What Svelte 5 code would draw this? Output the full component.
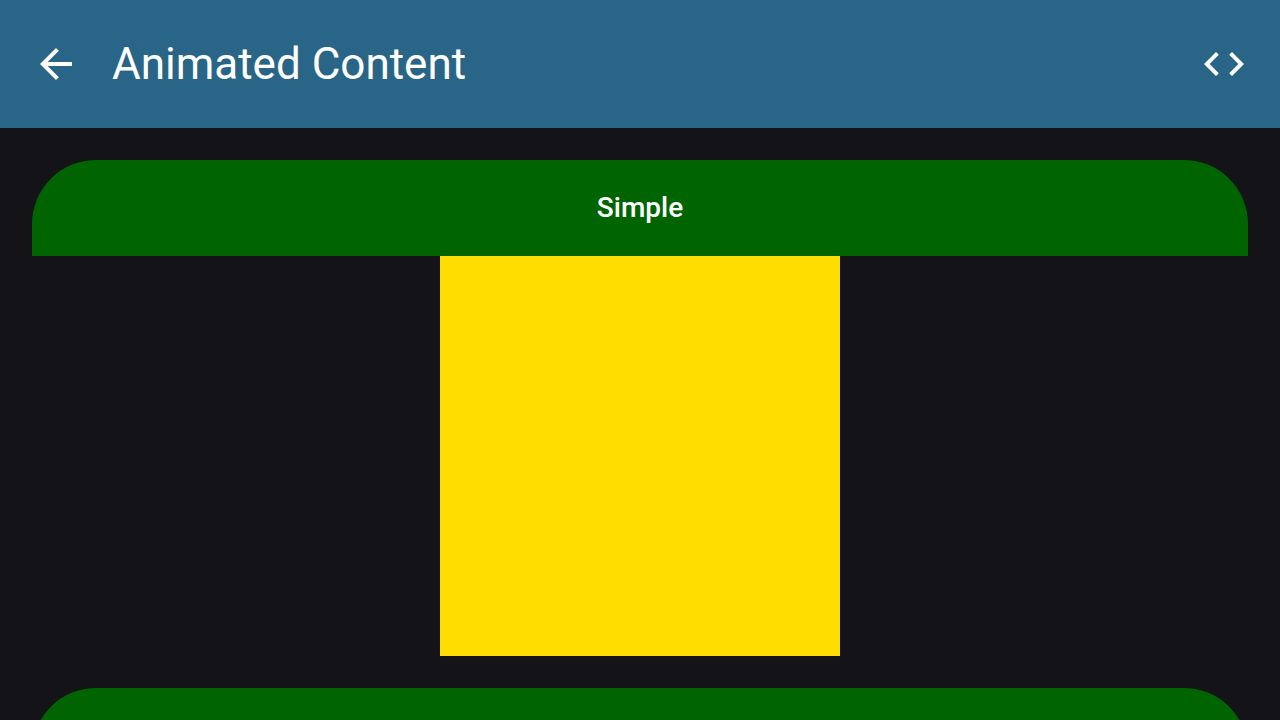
<script lang="ts">
  const sections = ['Simple', ''];
  let expanded = $state([true, true]);

  function toggle(index: number) {
    expanded[index] = !expanded[index];
  }
</script>

<div class="screen">
  <header>
    <button class="icon" aria-label="Back">
      <svg viewBox="0 0 24 24" aria-hidden="true">
        <path d="M20 11H7.83l5.59-5.59L12 4l-8 8 8 8 1.41-1.41L7.83 13H20v-2z" />
      </svg>
    </button>
    <h1>Animated Content</h1>
    <button class="icon" aria-label="View source">
      <svg viewBox="0 0 24 24" aria-hidden="true">
        <path d="M9.4 16.6L4.8 12l4.6-4.6L8 6l-6 6 6 6 1.4-1.4zm5.2 0l4.6-4.6-4.6-4.6L16 6l6 6-6 6-1.4-1.4z" />
      </svg>
    </button>
  </header>

  <main>
    {#each sections as name, i}
      <section>
        <button class="trigger" aria-label={name || 'Toggle size'} onclick={() => toggle(i)}>{name}</button>
        <div class="box" class:small={!expanded[i]}></div>
      </section>
    {/each}
  </main>
</div>

<style>
  :global(body) {
    margin: 0;
    background: #141418;
  }

  .screen {
    display: flex;
    flex-direction: column;
    height: 100vh;
    overflow: hidden;
    font-family: Roboto, sans-serif;
    color: #ffffff;
    background: #141418;
  }

  button {
    margin: 0;
    border: 0;
    font-family: inherit;
    color: inherit;
    cursor: pointer;
  }

  header {
    display: flex;
    flex: none;
    align-items: center;
    gap: 24px;
    padding: 32px;
    background: #296587;
  }

  .icon {
    display: flex;
    flex: none;
    padding: 8px;
    margin: -8px;
    background: none;
  }

  .icon svg {
    width: 48px;
    height: 48px;
    fill: currentColor;
  }

  h1 {
    flex: 1;
    margin: 0 8px;
    font-size: 44px;
    line-height: 64px;
    font-weight: 400;
  }

  main {
    display: flex;
    flex: 1;
    flex-direction: column;
    gap: 32px;
    min-height: 0;
    padding: 32px;
    overflow-y: auto;
    scrollbar-width: none;
  }

  section {
    display: flex;
    flex: none;
    flex-direction: column;
    align-items: center;
  }

  .trigger {
    width: 100%;
    min-height: 96px;
    padding: 28px 32px;
    border-radius: 64px 64px 0 0;
    font-size: 28px;
    line-height: 40px;
    font-weight: 500;
    background: #006400;
  }

  .box {
    width: 400px;
    height: 400px;
    background: #ffdd00;
    transition: width 300ms, height 300ms;
  }

  .small {
    width: 200px;
    height: 200px;
  }
</style>
